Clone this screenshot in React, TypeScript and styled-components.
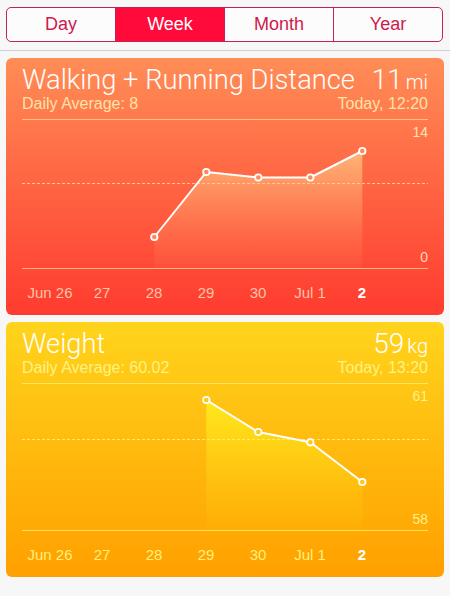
import React from 'react';
import styled, { createGlobalStyle } from 'styled-components';

const GlobalStyle = createGlobalStyle`
  body {
    margin: 0;
    background: #f7f7f7;
    font-family: "Liberation Sans", Arial, sans-serif;
  }
`;

const Page = styled.div`
  width: 450px;
`;

const TopBar = styled.div`
  padding: 7px 7px 8px 6px;
  border-bottom: 1px solid #cfcfcf;
`;

const Segmented = styled.div`
  display: flex;
  height: 35px;
  box-sizing: border-box;
  border: 1px solid #c7224f;
  border-radius: 5px;
  overflow: hidden;
  background: #fcfcfc;
`;

const Segment = styled.div<{ $active?: boolean }>`
  flex: 1;
  display: flex;
  align-items: center;
  justify-content: center;
  font-size: 18px;
  color: ${(p) => (p.$active ? '#ffffff' : '#cf1a4b')};
  background: ${(p) => (p.$active ? '#ff0a3a' : 'transparent')};

  & + & {
    border-left: 1px solid #c7224f;
  }
`;

const Cards = styled.div`
  padding-top: 7px;
`;

const Card = styled.div<{ $from: string; $to: string }>`
  margin: 0 6px 7px;
  padding: 6px 16px 0;
  border-radius: 6px;
  color: #ffffff;
  background: linear-gradient(180deg, ${(p) => p.$from} 0%, ${(p) => p.$to} 100%);
`;

const HeaderRow = styled.div`
  display: flex;
  justify-content: space-between;
  align-items: baseline;
  height: 32px;
  line-height: 32px;
`;

const Title = styled.div`
  font-family: Roboto, "Liberation Sans", sans-serif;
  font-weight: 300;
  font-size: 27.3px;
`;

const Value = styled.div`
  font-family: Roboto, "Liberation Sans", sans-serif;
  font-weight: 300;
  font-size: 28px;
`;

const Unit = styled.span`
  font-size: 20px;
  margin-left: 3px;
`;

const SubRow = styled.div<{ $color: string }>`
  display: flex;
  justify-content: space-between;
  height: 16px;
  line-height: 16px;
  font-size: 16px;
  color: ${(p) => p.$color};
`;

const Chart = styled.div<{ $height: number; $rule: string }>`
  position: relative;
  margin-top: 7px;
  height: ${(p) => p.$height}px;
  border-top: 1px solid ${(p) => p.$rule};
  border-bottom: 1px solid ${(p) => p.$rule};
`;

const ChartSvg = styled.svg`
  display: block;
`;

const AxisLabel = styled.span<{ $pos: 'top' | 'bottom'; $color: string }>`
  position: absolute;
  right: 0;
  ${(p) => (p.$pos === 'top' ? 'top: 4px;' : 'bottom: 3px;')}
  font-size: 14px;
  line-height: 16px;
  color: ${(p) => p.$color};
`;

const Dates = styled.div<{ $color: string }>`
  display: grid;
  grid-template-columns: repeat(7, 52px);
  padding-left: 2px;
  height: 46px;
  align-items: center;
  font-size: 15px;
  color: ${(p) => p.$color};
`;

const DateLabel = styled.span<{ $today?: boolean }>`
  text-align: center;
  color: ${(p) => (p.$today ? '#ffffff' : 'inherit')};
  font-weight: ${(p) => (p.$today ? 700 : 400)};
`;

const DAYS = ['Jun 26', '27', '28', '29', '30', 'Jul 1', '2'];

interface ChartProps {
  id: string;
  height: number;
  points: Array<[number, number]>;
  dashY: number;
  fillTop: string;
  fillBottom: string;
  dotFill: string;
  dash: string;
}

const LineChart: React.FC<ChartProps> = ({ id, height, points, dashY, fillTop, fillBottom, dotFill, dash }) => {
  const xs = points.map(([i, y]) => [28.3 + 52 * i, y] as const);
  const line = xs.map(([x, y]) => `${x},${y}`).join(' ');
  const area = `${xs[0][0]},${height} ${line} ${xs[xs.length - 1][0]},${height}`;
  const top = Math.min(...xs.map((p) => p[1]));
  return (
    <ChartSvg width={406} height={height} viewBox={`0 0 406 ${height}`}>
      <defs>
        <linearGradient id={id} x1="0" y1={top} x2="0" y2={height} gradientUnits="userSpaceOnUse">
          <stop offset="0" stopColor={fillTop} />
          <stop offset="1" stopColor={fillBottom} />
        </linearGradient>
      </defs>
      <polygon points={area} fill={`url(#${id})`} />
      <line x1="0" x2="406" y1={dashY} y2={dashY} stroke={dash} strokeWidth="1" strokeDasharray="3 2" />
      <polyline points={line} fill="none" stroke="#ffffff" strokeWidth="2" strokeLinejoin="round" />
      {xs.map(([x, y], k) => (
        <circle key={k} cx={x} cy={y} r="3.2" fill={dotFill} stroke="#ffffff" strokeWidth="1.8" />
      ))}
    </ChartSvg>
  );
};

export default function App() {
  return (
    <Page>
      <GlobalStyle />
      <TopBar>
        <Segmented>
          <Segment>Day</Segment>
          <Segment $active>Week</Segment>
          <Segment>Month</Segment>
          <Segment>Year</Segment>
        </Segmented>
      </TopBar>
      <Cards>
        <Card $from="#ff8d56" $to="#ff3b2f">
          <HeaderRow>
            <Title>Walking + Running Distance</Title>
            <Value>
              11<Unit>mi</Unit>
            </Value>
          </HeaderRow>
          <SubRow $color="#ffe2a8">
            <span>Daily Average: 8</span>
            <span>Today, 12:20</span>
          </SubRow>
          <Chart $height={148} $rule="rgba(255, 215, 160, 0.75)">
            <LineChart
              id="walk"
              height={148}
              points={[
                [2, 117],
                [3, 52],
                [4, 57.5],
                [5, 57.5],
                [6, 31],
              ]}
              dashY={63.5}
              fillTop="rgba(255, 190, 125, 0.9)"
              fillBottom="rgba(255, 120, 80, 0.15)"
              dotFill="#ff8a55"
              dash="rgba(255, 210, 150, 0.85)"
            />
            <AxisLabel $pos="top" $color="#ffe2b8">14</AxisLabel>
            <AxisLabel $pos="bottom" $color="#ffd2b8">0</AxisLabel>
          </Chart>
          <Dates $color="#ffc3a8">
            {DAYS.map((d, i) => (
              <DateLabel key={d} $today={i === 6}>
                {d}
              </DateLabel>
            ))}
          </Dates>
        </Card>
        <Card $from="#ffd41c" $to="#ffa000">
          <HeaderRow>
            <Title>Weight</Title>
            <Value>
              59<Unit>kg</Unit>
            </Value>
          </HeaderRow>
          <SubRow $color="#fff282">
            <span>Daily Average: 60.02</span>
            <span>Today, 13:20</span>
          </SubRow>
          <Chart $height={146} $rule="rgba(255, 235, 110, 0.85)">
            <LineChart
              id="weight"
              height={146}
              points={[
                [3, 16],
                [4, 48],
                [5, 58.3],
                [6, 98],
              ]}
              dashY={55.5}
              fillTop="rgba(255, 236, 30, 0.95)"
              fillBottom="rgba(255, 190, 10, 0.2)"
              dotFill="#ffc812"
              dash="rgba(255, 240, 110, 0.9)"
            />
            <AxisLabel $pos="top" $color="#fff08a">61</AxisLabel>
            <AxisLabel $pos="bottom" $color="#fff08a">58</AxisLabel>
          </Chart>
          <Dates $color="#fff07a">
            {DAYS.map((d, i) => (
              <DateLabel key={d} $today={i === 6}>
                {d}
              </DateLabel>
            ))}
          </Dates>
        </Card>
      </Cards>
    </Page>
  );
}
